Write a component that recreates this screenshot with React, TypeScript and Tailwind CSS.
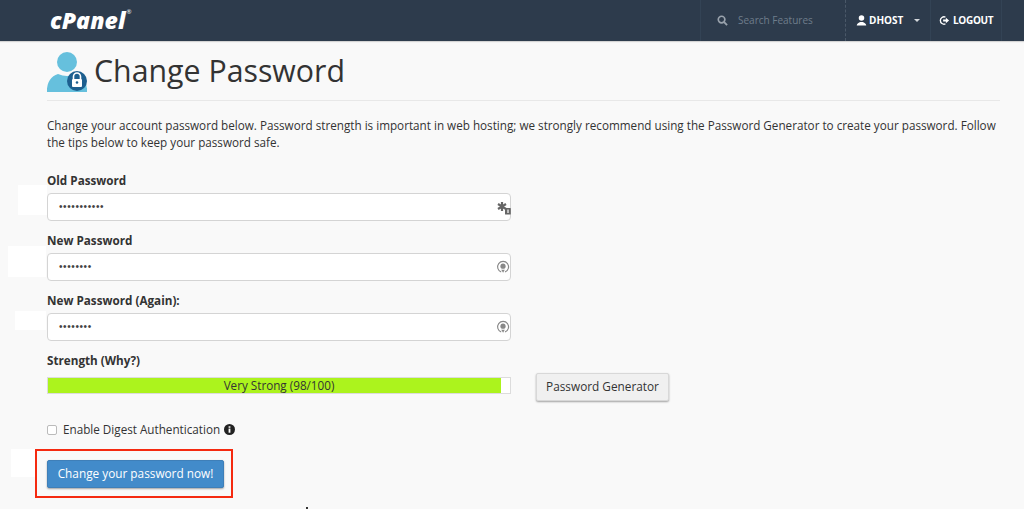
import React from "react";

function Field({ label, dots, icon }: { label: string; dots: number; icon: "key" | "eye" }) {
  return (
    <div className="flex flex-col">
      <label className="h-[20px] text-[11.7px] leading-[20px] font-bold text-[#333]">{label}</label>
      <div className="mt-[3px] relative flex h-[28px] w-[464px] items-center rounded-[4px] border border-[#d4d4d4] bg-white pl-[11px]">
        <span className="text-[10px] leading-none tracking-[0.6px] text-[#444] font-['Liberation_Sans',sans-serif]">{"•".repeat(dots)}</span>
        {icon === "key" ? (
          <svg viewBox="0 0 14 14" className="absolute right-[-1px] top-[7px] h-[14px] w-[14px]">
            <path d="M5 1v9M1 3l8 5M9 3L1 8" stroke="#666" strokeWidth="2.200" fill="none" />
            <rect x="8" y="7" width="5.800" height="6.500" rx="0.600" fill="#666" />
            <rect x="10.400" y="8.500" width="1.200" height="3.500" fill="#fff" />
          </svg>
        ) : (
          <svg viewBox="0 0 14 14" className="absolute right-[0px] top-[6px] h-[14px] w-[14px]" fill="none">
            <path d="M5.200 12A5.500 5.500 0 1 1 9 12" stroke="#888" strokeWidth="1.100" />
            <circle cx="7" cy="6.200" r="2.600" fill="#888" />
            <path d="M5.200 9.800l1.900 3 1.700-3z" fill="#888" />
          </svg>
        )}
      </div>
    </div>
  );
}

export default function App() {
  return (
    <div className="relative h-[509px] w-[1024px] overflow-hidden bg-[#f9f9f9] font-['Open_Sans',sans-serif]">
      <header className="flex h-[41px] items-center bg-[#2d3b4c] shadow-[0_1px_1px_rgba(0,0,0,0.15)]">
        <div className="ml-[50px] flex items-start text-[23px] leading-none font-extrabold italic tracking-[0.1px] text-white">
          cPanel<span className="ml-[1px] text-[6px] leading-none font-normal not-italic">®</span>
        </div>
        <div className="ml-auto flex h-full items-center">
          <div className="flex h-full w-[145px] items-center border-l border-[#334355] pl-[16px]">
            <svg viewBox="0 0 12 12" className="h-[11px] w-[11px]" fill="none">
              <circle cx="5" cy="5" r="3.600" stroke="#9aa3ad" strokeWidth="1.800" />
              <path d="M7.800 7.800L11 11" stroke="#9aa3ad" strokeWidth="2" />
            </svg>
            <span className="ml-[10px] text-[10px] text-[#6f7d8b]">Search Features</span>
          </div>
          <div className="flex h-full w-[85px] items-center border-l border-dashed border-[#4a5868] pl-[10px]">
            <svg viewBox="0 0 12 12" className="h-[11px] w-[11px]" fill="#fff">
              <circle cx="6" cy="3.400" r="3" />
              <path d="M0.800 11.500c0-2.600 2.500-3.200 3.800-4h2.800c1.300.8 3.800 1.400 3.800 4z" />
            </svg>
            <span className="ml-[2px] text-[10px] font-bold text-white">DHOST</span>
            <span className="ml-[11px] h-0 w-0 border-x-[3px] border-t-[3px] border-x-transparent border-t-[#d5d9dd]" />
          </div>
          <div className="flex h-full w-[71px] items-center border-l border-[#334355] pl-[8px]">
            <svg viewBox="0 0 12 12" className="h-[11px] w-[11px]" fill="none">
              <path d="M7 2.300A4 4 0 1 0 7 9.700" stroke="#fff" strokeWidth="1.500" />
              <path d="M4.500 5h3V3l3.500 3-3.500 3V7h-3z" fill="#fff" />
            </svg>
            <span className="ml-[3px] text-[10px] font-bold tracking-[-0.3px] text-white">LOGOUT</span>
          </div>
          <div className="h-full w-[23px] border-l border-[#334355]" />
        </div>
      </header>

      <main className="ml-[47px] w-[953px]">
        <div className="flex h-[60px] items-center border-b border-[#e8e8e8] pt-[2px]">
          <svg viewBox="0 0 40 40" className="h-[40px] w-[40px] shrink-0">
            <circle cx="20" cy="10" r="10" fill="#66c0dd" />
            <path d="M0 39c0-9 4-15 11-17 6 2.500 12 2.500 18 0 7 2 11 8 11 17z" fill="#66c0dd" />
            <rect x="0" y="36" width="40" height="4" fill="#66c0dd" />
            <circle cx="30" cy="29" r="10" fill="#1d5f8f" />
            <path d="M26.500 27v-2.500a3.500 3.500 0 0 1 7 0V27" fill="none" stroke="#fff" strokeWidth="1.600" />
            <rect x="25" y="27" width="10" height="8" rx="1" fill="#fff" />
            <circle cx="30" cy="30.500" r="1.300" fill="#1d5f8f" />
          </svg>
          <h1 className="ml-[7px] text-[30.3px] leading-none font-normal text-[#333]">Change Password</h1>
        </div>

        <p className="mt-[16px] w-[953px] text-[11.7px] leading-[16.5px] text-[#333]">
          Change your account password below. Password strength is important in web hosting; we strongly recommend using the Password Generator to create your password. Follow the tips below to keep your password safe.
        </p>

        <div className="mt-[20px] flex flex-col gap-[9px]">
          <Field label="Old Password" dots={11} icon="key" />
          <Field label="New Password" dots={8} icon="eye" />
          <Field label="New Password (Again):" dots={8} icon="eye" />
        </div>

        <div className="mt-[9px] h-[20px] text-[11.7px] leading-[20px] font-bold text-[#333]">Strength (Why?)</div>
        <div className="mt-[3px] flex items-start">
          <div className="relative mt-[4px] h-[17px] w-[464px] overflow-hidden border border-[#dcdcdc] bg-white">
            <div className="h-full w-[453px] bg-[#acf31d]" />
            <div className="absolute inset-0 text-center text-[11.7px] leading-[15px] text-[#333]">Very Strong (98/100)</div>
          </div>
          <button className="ml-[25px] h-[28px] w-[133px] rounded-[2px] border border-[#d8d8d8] bg-[#f0f0f0] text-[11.8px] text-[#333] shadow-[0_1px_2px_rgba(0,0,0,0.35)]">
            Password Generator
          </button>
        </div>

        <div className="mt-[20px] flex h-[17px] items-center">
          <span className="h-[10px] w-[10px] rounded-[2px] border border-[#bbb] bg-white" />
          <span className="ml-[6px] text-[11.7px] text-[#333]">Enable Digest Authentication</span>
          <svg viewBox="0 0 12 12" className="ml-[4px] h-[11px] w-[11px]">
            <circle cx="6" cy="6" r="6" fill="#222" />
            <rect x="5" y="5" width="2" height="4.500" fill="#fff" />
            <rect x="5" y="2.500" width="2" height="1.600" fill="#fff" />
          </svg>
        </div>

        <button className="mt-[22px] h-[28px] w-[177px] rounded-[2px] border border-[#3f7fb8] bg-[#428bca] text-[11.8px] font-medium text-white shadow-[0_1px_2px_rgba(0,0,0,0.35)]">
          Change your password now!
        </button>
      </main>

      {/* overlays */}
      <div className="absolute left-[18px] top-[185px] h-[30px] w-[29px] bg-white" />
      <div className="absolute left-[8px] top-[246px] h-[31px] w-[38px] bg-white" />
      <div className="absolute left-[15px] top-[311px] h-[19px] w-[31px] bg-white" />
      <div className="absolute left-[11px] top-[449px] h-[28px] w-[25px] bg-white" />
      <div className="absolute left-[35px] top-[449px] h-[49px] w-[198px] border-[2px] border-[#f52a10]" />
      <div className="absolute left-[306px] top-[507px] h-[2px] w-[2px] bg-[#333]" />
    </div>
  );
}
